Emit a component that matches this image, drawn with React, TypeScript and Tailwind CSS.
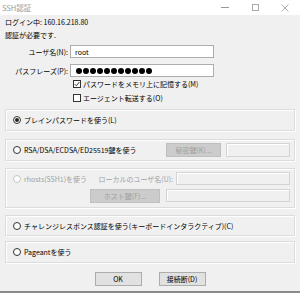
import React from "react";

const font = { fontFamily: '"Noto Sans CJK JP", "Noto Sans", sans-serif' };

function Radio({ checked, disabled }: { checked?: boolean; disabled?: boolean }) {
  return (
    <span
      className={`flex h-[8px] w-[8px] shrink-0 items-center justify-center rounded-full border bg-white ${
        disabled ? "border-[#c4c4c4]" : "border-[#333]"
      }`}
    >
      {checked && <span className="h-[4px] w-[4px] rounded-full bg-[#222]" />}
    </span>
  );
}

function Check({ checked }: { checked?: boolean }) {
  return (
    <span className="flex h-[8px] w-[8px] shrink-0 items-center justify-center border border-[#333] bg-white">
      {checked && (
        <svg width="6" height="6" viewBox="0 0 6 6">
          <path d="M0.6 3.1 L2.3 4.8 L5.4 1" fill="none" stroke="#222" strokeWidth="0.9" />
        </svg>
      )}
    </span>
  );
}

// Windows-style etched group frame
function Group({ className, children }: { className: string; children: React.ReactNode }) {
  return (
    <div
      className={`mx-[5px] border border-[#dcdcdc] shadow-[inset_1px_1px_0_#fff,1px_1px_0_#fff] ${className}`}
    >
      {children}
    </div>
  );
}

const disabledBtn =
  "flex items-center justify-center border border-[#bfbfbf] bg-[#cccccc] text-[#a0a0a0]";
const disabledField = "border border-[#d4d4d4] bg-[#f0f0f0] shadow-[inset_1px_1px_0_#fff]";

export default function App() {
  return (
    <div
      className="flex h-[293px] w-[300px] flex-col overflow-hidden bg-[#f0f0f0] text-[7px] leading-[10px] text-black"
      style={font}
    >
      {/* title bar */}
      <div className="flex h-[15px] shrink-0 items-center bg-white">
        <span className="pl-[2px] text-[7.5px] text-[#999]">SSH認証</span>
        <div className="ml-auto flex items-center">
          <div className="flex w-[30px] justify-center">
            <div className="h-px w-[8px] bg-[#999]" />
          </div>
          <div className="flex w-[30px] justify-center">
            <div className="h-[7px] w-[7px] border border-[#aaa]" />
          </div>
          <div className="flex w-[30px] justify-center">
            <svg width="8" height="8" viewBox="0 0 8 8">
              <path d="M0.5 0.5 L7.5 7.5 M7.5 0.5 L0.5 7.5" stroke="#999" strokeWidth="0.8" />
            </svg>
          </div>
        </div>
      </div>

      <div className="mt-[2px] h-[10px] pl-[5px]">ログイン中: 160.16.218.80</div>
      <div className="mt-[3px] h-[10px] pl-[5px]">認証が必要です.</div>

      <div className="mt-[5px] flex h-[13px] items-center">
        <div className="w-[70px] pr-[2px] text-right">ユーザ名(N):</div>
        <div className="flex h-[13px] w-[144px] items-center border border-[#adadad] bg-white pl-[4px]">
          root
        </div>
      </div>
      <div className="mt-[6px] flex h-[13px] items-center">
        <div className="w-[70px] pr-[2px] text-right">パスフレーズ(P):</div>
        <div className="flex h-[13px] w-[144px] items-center gap-[1px] border border-[#adadad] bg-white pl-[5px]">
          {Array.from({ length: 11 }).map((_, i) => (
            <span key={i} className="h-[6px] w-[6px] rounded-full bg-black" />
          ))}
        </div>
      </div>

      <div className="mt-[2px] flex h-[10px] items-center gap-[2px] pl-[73px]">
        <Check checked />
        <span>パスワードをメモリ上に記憶する(M)</span>
      </div>
      <div className="mt-[4px] flex h-[10px] items-center gap-[2px] pl-[73px]">
        <Check />
        <span>エージェント転送する(O)</span>
      </div>

      <Group className="mt-[6px] flex h-[22px] items-center pl-[7px]">
        <Radio checked />
        <span className="ml-[3px]">プレインパスワードを使う(L)</span>
      </Group>

      <Group className="mt-[8px] flex h-[22px] items-center pl-[7px] pr-[4px]">
        <Radio />
        <span className="ml-[3px]">RSA/DSA/ECDSA/ED25519鍵を使う</span>
        <div className={`ml-auto h-[14px] w-[55px] ${disabledBtn}`}>秘密鍵(K)...</div>
        <div className={`ml-[5px] h-[14px] w-[64px] ${disabledField}`} />
      </Group>

      <Group className="mt-[7px] flex h-[40px] flex-col gap-[4px] pl-[7px] pr-[4px] pt-[3px]">
        <div className="flex h-[13px] items-center text-[#a0a0a0]">
          <Radio disabled />
          <span className="ml-[3px]">rhosts(SSH1)を使う</span>
          <span className="ml-auto mr-[3px]">ローカルのユーザ名(U):</span>
          <div className={`h-[13px] w-[114px] ${disabledField}`} />
        </div>
        <div className="flex h-[13px] items-center">
          <div className={`ml-[77px] h-[14px] w-[70px] ${disabledBtn}`}>ホスト鍵(F)...</div>
          <div className={`ml-auto h-[13px] w-[124px] ${disabledField}`} />
        </div>
      </Group>

      <Group className="mt-[7px] flex h-[21px] items-center pl-[7px]">
        <Radio />
        <span className="ml-[3px] whitespace-nowrap">
          チャレンジレスポンス認証を使う(キーボードインタラクティブ)(C)
        </span>
      </Group>

      <Group className="mt-[5px] flex h-[22px] items-center pl-[7px]">
        <Radio />
        <span className="ml-[3px]">Pageantを使う</span>
      </Group>

      <div className="mt-[9px] flex justify-center gap-[17px]">
        <div className="flex h-[14px] w-[47px] items-center justify-center border border-[#adadad] bg-[#e1e1e1]">
          OK
        </div>
        <div className="flex h-[14px] w-[47px] items-center justify-center border border-[#adadad] bg-[#e1e1e1]">
          接続断(D)
        </div>
      </div>

      <div className="mt-auto h-[2px] shrink-0 bg-[#8a8a8a]" />
    </div>
  );
}
